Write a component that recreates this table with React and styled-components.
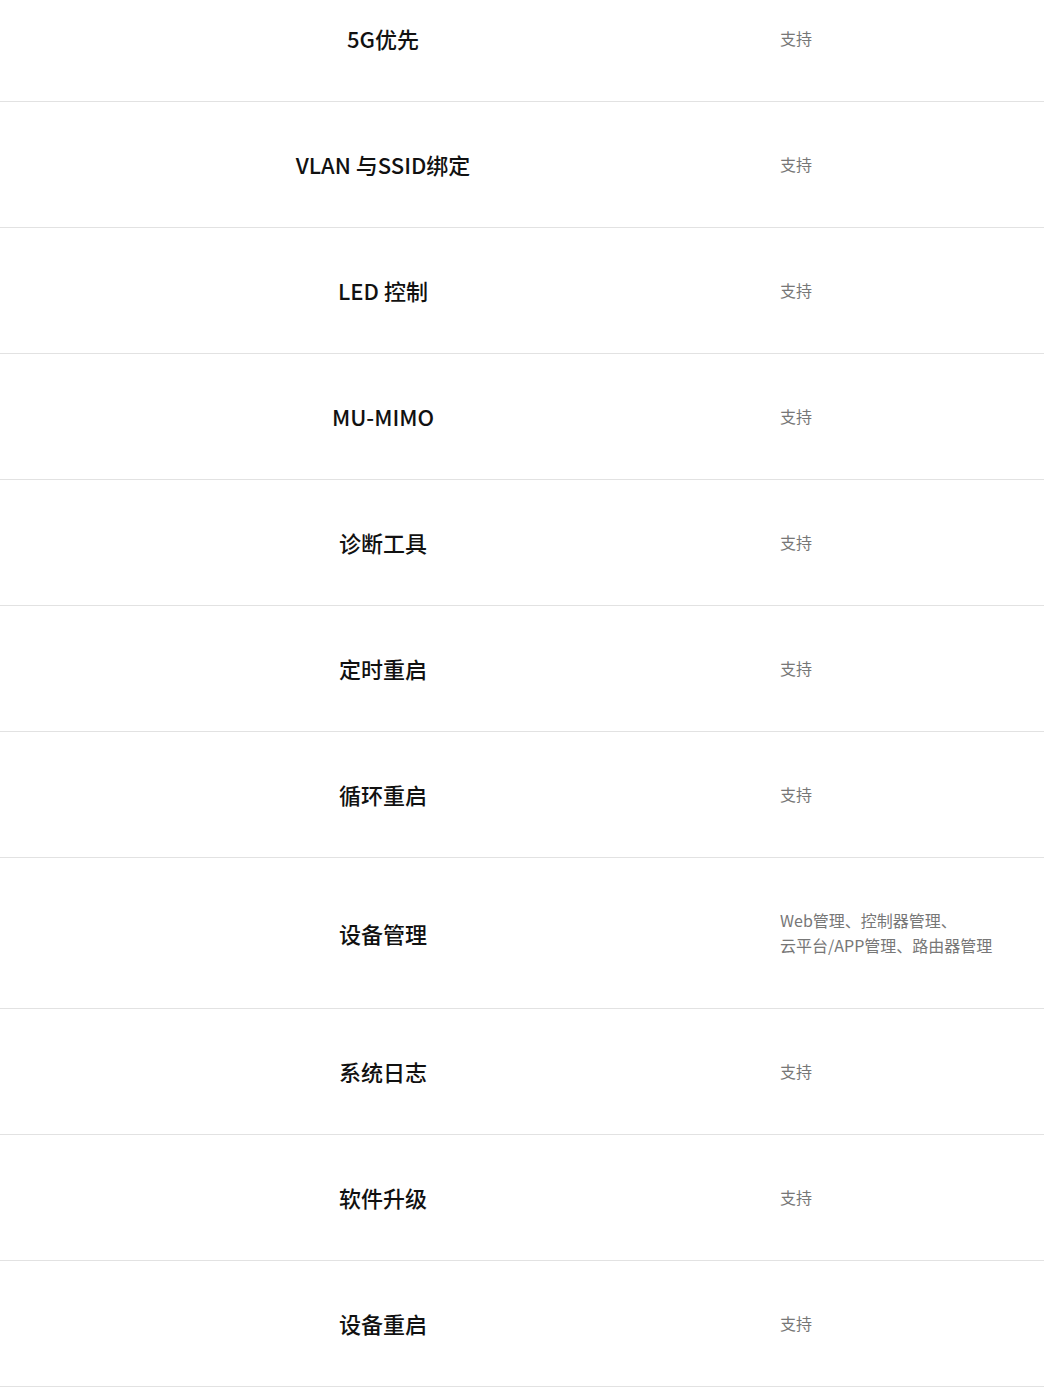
import { createGlobalStyle, styled } from "styled-components";

const GlobalStyle = createGlobalStyle`
  html, body {
    margin: 0;
    padding: 0;
    background: #fff;
  }
  body {
    font-family: "Noto Sans CJK SC", "Noto Sans", sans-serif;
  }
`;

const Table = styled.div`
  display: flex;
  flex-direction: column;
  width: 1044px;
`;

const Row = styled.div`
  display: grid;
  grid-template-columns: 766px 1fr;
  align-items: center;
  padding: ${(props) => (props.cut ? "0 0 25px" : "50px 0")};
  height: ${(props) => (props.cut ? "102px" : "auto")};
  box-sizing: border-box;
  border-bottom: 1px solid #e2e2e2;
`;

const Label = styled.div`
  text-align: center;
  font-size: 22px;
  font-weight: 500;
  line-height: 25px;
  color: #111;
`;

const Value = styled.div`
  padding-left: 14px;
  font-size: 16px;
  line-height: 25px;
  color: #777;
`;

const rows = [
  ["5G优先", "支持"],
  ["VLAN 与SSID绑定", "支持"],
  ["LED 控制", "支持"],
  ["MU-MIMO", "支持"],
  ["诊断工具", "支持"],
  ["定时重启", "支持"],
  ["循环重启", "支持"],
  ["设备管理", ["Web管理、控制器管理、", "云平台/APP管理、路由器管理"]],
  ["系统日志", "支持"],
  ["软件升级", "支持"],
  ["设备重启", "支持"],
];

export default function App() {
  return (
    <>
      <GlobalStyle />
      <Table>
        {rows.map(([label, value], i) => (
          <Row key={label} cut={i === 0}>
            <Label>{label}</Label>
            <Value>
              {Array.isArray(value)
                ? value.map((line, j) => (
                    <span key={j}>
                      {line}
                      {j < value.length - 1 && <br />}
                    </span>
                  ))
                : value}
            </Value>
          </Row>
        ))}
      </Table>
    </>
  );
}
